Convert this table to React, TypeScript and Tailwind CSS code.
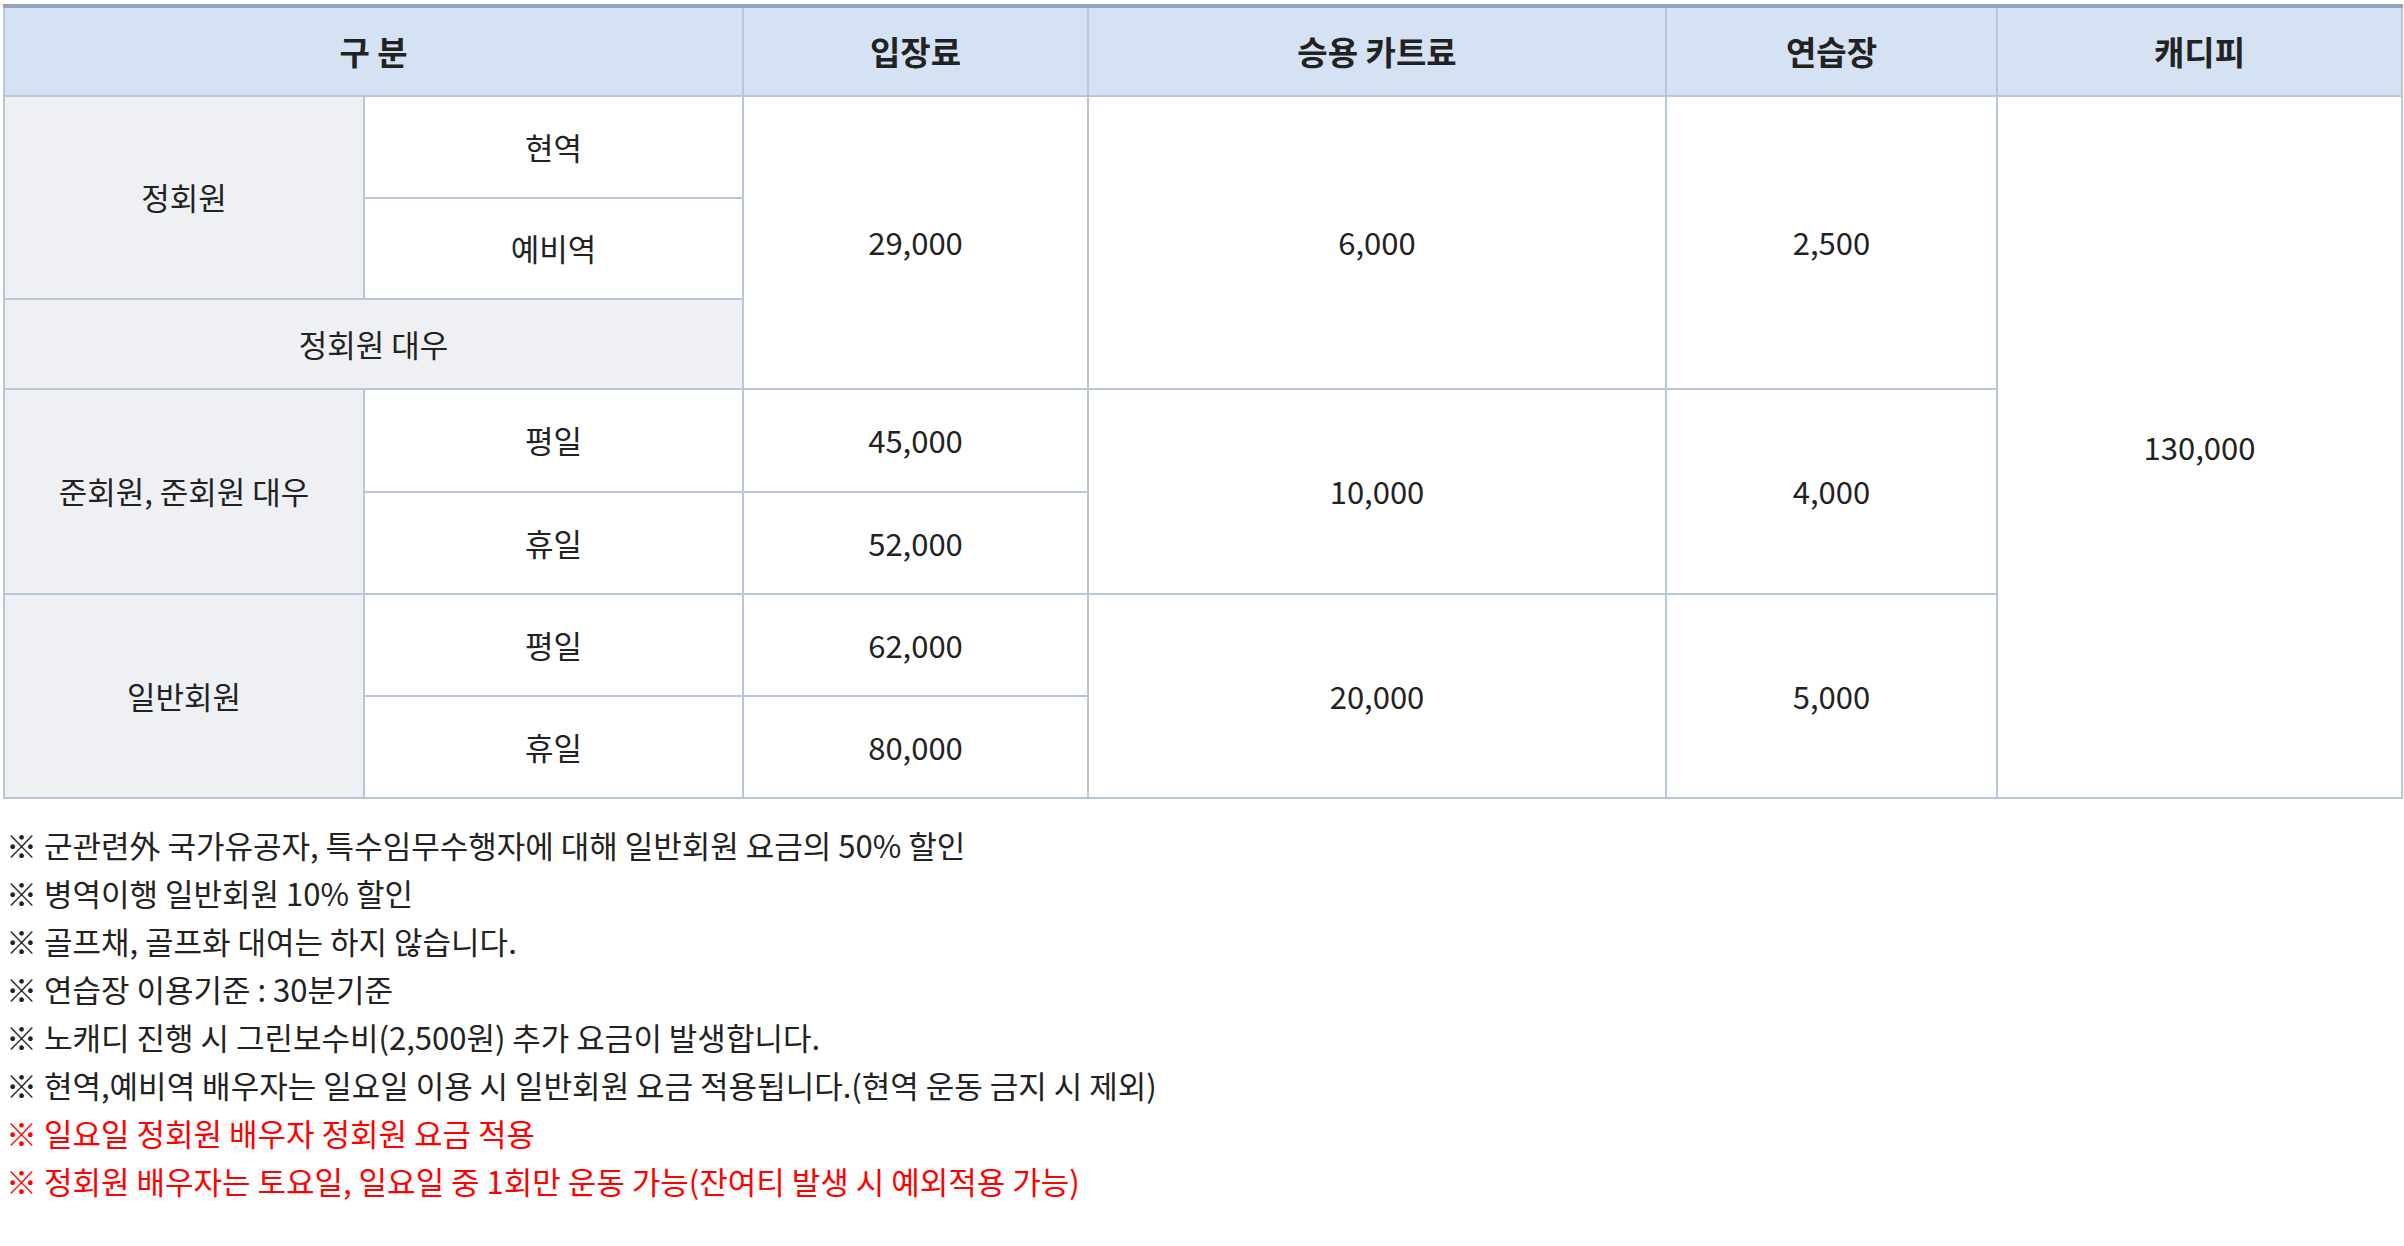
import React from "react";

const B = "border-2 border-[#b8c6da]";
const th = `${B} border-t-4 border-t-[#94a3ba] bg-[#d5e2f3] font-bold text-[33px] text-[#222]`;
const gray = `${B} bg-[#eef0f4]`;
const white = `${B} bg-white`;

export default function App() {
  return (
    <div
      className="w-[2404px] pl-[3px] pt-[4px] text-[#222] bg-white"
      style={{ fontFamily: '"Noto Sans CJK KR", "Noto Sans", sans-serif' }}
    >
      <table className="table-fixed border-collapse w-[2398px] text-center text-[31px]">
        <colgroup>
          <col className="w-[360px]" />
          <col className="w-[379px]" />
          <col className="w-[345px]" />
          <col className="w-[578px]" />
          <col className="w-[331px]" />
          <col className="w-[405px]" />
        </colgroup>
        <thead>
          <tr className="h-[90px]">
            <th colSpan={2} className={th}>구 분</th>
            <th className={th}>입장료</th>
            <th className={th}>승용 카트료</th>
            <th className={th}>연습장</th>
            <th className={th}>캐디피</th>
          </tr>
        </thead>
        <tbody>
          <tr className="h-[102px]">
            <td rowSpan={2} className={gray}>정회원</td>
            <td className={white}>현역</td>
            <td rowSpan={3} className={white}>29,000</td>
            <td rowSpan={3} className={white}>6,000</td>
            <td rowSpan={3} className={white}>2,500</td>
            <td rowSpan={7} className={white}>130,000</td>
          </tr>
          <tr className="h-[101px]">
            <td className={white}>예비역</td>
          </tr>
          <tr className="h-[90px]">
            <td colSpan={2} className={gray}>정회원 대우</td>
          </tr>
          <tr className="h-[103px]">
            <td rowSpan={2} className={gray}>준회원, 준회원 대우</td>
            <td className={white}>평일</td>
            <td className={white}>45,000</td>
            <td rowSpan={2} className={white}>10,000</td>
            <td rowSpan={2} className={white}>4,000</td>
          </tr>
          <tr className="h-[102px]">
            <td className={white}>휴일</td>
            <td className={white}>52,000</td>
          </tr>
          <tr className="h-[102px]">
            <td rowSpan={2} className={gray}>일반회원</td>
            <td className={white}>평일</td>
            <td className={white}>62,000</td>
            <td rowSpan={2} className={white}>20,000</td>
            <td rowSpan={2} className={white}>5,000</td>
          </tr>
          <tr className="h-[102px]">
            <td className={white}>휴일</td>
            <td className={white}>80,000</td>
          </tr>
        </tbody>
      </table>
      <ul className="mt-[22px] pl-[3px] text-[31px] leading-[48px] pb-[40px]">
        <li>※ 군관련外 국가유공자, 특수임무수행자에 대해 일반회원 요금의 50% 할인</li>
        <li>※ 병역이행 일반회원 10% 할인</li>
        <li>※ 골프채, 골프화 대여는 하지 않습니다.</li>
        <li>※ 연습장 이용기준 : 30분기준</li>
        <li>※ 노캐디 진행 시 그린보수비(2,500원) 추가 요금이 발생합니다.</li>
        <li>※ 현역,예비역 배우자는 일요일 이용 시 일반회원 요금 적용됩니다.(현역 운동 금지 시 제외)</li>
        <li className="text-[#ff0000]">※ 일요일 정회원 배우자 정회원 요금 적용</li>
        <li className="text-[#ff0000]">※ 정회원 배우자는 토요일, 일요일 중 1회만 운동 가능(잔여티 발생 시 예외적용 가능)</li>
      </ul>
    </div>
  );
}
